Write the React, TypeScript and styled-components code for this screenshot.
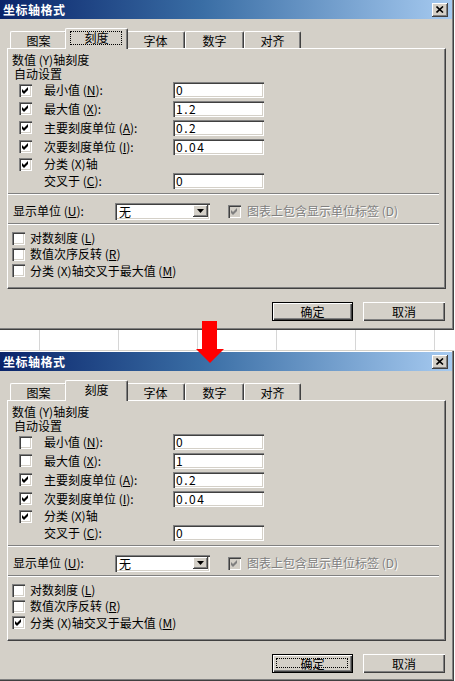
import React from "react";
import styled, { createGlobalStyle, css } from "styled-components";

const FONT = `"Noto Sans CJK SC", "Noto Sans", sans-serif`;

const Global = createGlobalStyle`
  html, body { margin: 0; padding: 0; background: #ffffff; }
  body { font-family: ${FONT}; font-size: 12px; color: #000; }
  * { box-sizing: border-box; }
`;

const Page = styled.div`
  position: relative;
  width: 455px;
  height: 681px;
  overflow: hidden;
  background: #fff;
  display: flex;
  flex-direction: column;
`;

const Dialog = styled.div<{ $h: number; $edge?: boolean }>`
  width: 454px;
  height: ${(p) => p.$h}px;
  flex-shrink: 0;
  background: #d4d0c8;
  display: flex;
  flex-direction: column;
  box-shadow: inset -1px -1px #404040, inset -2px -2px #808080;
  ${(p) =>
    p.$edge &&
    css`
      border-top: 1px solid #d4d0c8;
      padding-top: 1px;
      background-image: linear-gradient(#ffffff, #ffffff);
      background-size: 100% 1px;
      background-repeat: no-repeat;
      background-position: 0 0;
    `}
`;

const TitleBar = styled.div`
  height: 19px;
  flex-shrink: 0;
  margin-right: 2px;
  background: linear-gradient(to right, #0a246a, #3a6ea5 45%, #a6caf0);
  display: flex;
  align-items: center;
  justify-content: space-between;
  padding-left: 3px;
  padding-right: 4px;
`;

const TitleText = styled.span`
  color: #fff;
  font-weight: bold;
  font-size: 12px;
  line-height: 19px;
  letter-spacing: 0.5px;
`;

const CloseButton = styled.div`
  width: 16px;
  height: 14px;
  background: #d4d0c8;
  box-shadow: inset -1px -1px #404040, inset 1px 1px #ffffff, inset -2px -2px #808080;
  display: flex;
  align-items: center;
  justify-content: center;
`;

const TabStrip = styled.div`
  display: flex;
  align-items: flex-end;
  height: 20px;
  margin-top: 9px;
  padding-left: 10px;
  position: relative;
  z-index: 2;
`;

const Tab = styled.div<{ $w: number; $active?: boolean }>`
  position: relative;
  width: ${(p) => p.$w}px;
  height: 17px;
  background: #d4d0c8;
  border-top: 1px solid #fff;
  border-left: 1px solid #fff;
  border-right: 1px solid #404040;
  border-top-left-radius: 2px;
  border-top-right-radius: 2px;
  box-shadow: inset -1px 0 #808080;
  display: flex;
  align-items: center;
  justify-content: center;
  line-height: 15px;
  ${(p) =>
    p.$active &&
    css`
      width: ${p.$w + 4}px;
      margin: 0 -2px -1px;
      height: 21px;
      padding-bottom: 3px;
      z-index: 3;
    `}
`;

const FocusRect = styled.span`
  position: absolute;
  left: 4px;
  right: 5px;
  top: 2px;
  bottom: 4px;
  border: 1px dotted #000;
`;

const Panel = styled.div`
  margin-left: 7px;
  width: 439px;
  height: 241px;
  flex-shrink: 0;
  background: #d4d0c8;
  border-top: 1px solid #fff;
  border-left: 1px solid #fff;
  border-right: 1px solid #404040;
  border-bottom: 1px solid #404040;
  box-shadow: inset -1px -1px #808080;
  padding-top: 4px;
  display: flex;
  flex-direction: column;
`;

const Heading = styled.div<{ $indent: number }>`
  height: 14px;
  line-height: 14px;
  padding-left: ${(p) => p.$indent}px;
  white-space: nowrap;
`;

const OptionRow = styled.div<{ $h: number; $indent: number; $gap: number }>`
  height: ${(p) => p.$h}px;
  display: flex;
  align-items: center;
  gap: ${(p) => p.$gap}px;
  padding-left: ${(p) => p.$indent}px;
  white-space: nowrap;
`;

const Box = styled.span<{ $disabled?: boolean; $empty?: boolean }>`
  width: 13px;
  height: 13px;
  flex-shrink: 0;
  display: inline-flex;
  align-items: center;
  justify-content: center;
  background: ${(p) => (p.$disabled ? "#d4d0c8" : "#fff")};
  box-shadow: inset 1px 1px #808080, inset 2px 2px #404040, inset -1px -1px #ffffff,
    inset -2px -2px #d4d0c8;
  ${(p) =>
    p.$empty &&
    css`
      background: transparent;
      box-shadow: none;
    `}
`;

const OptionLabel = styled.span<{ $w?: number }>`
  ${(p) => (p.$w ? `width: ${p.$w}px;` : "")}
  line-height: 14px;
  flex-shrink: 0;
`;

const TextField = styled.div`
  width: 91px;
  height: 16px;
  background: #fff;
  box-shadow: inset 1px 1px #808080, inset 2px 2px #404040, inset -1px -1px #ffffff,
    inset -2px -2px #d4d0c8;
  padding: 0 0 0 3px;
  line-height: 16px;
  letter-spacing: 1.5px;
  font-size: 12px;
`;

const Separator = styled.div<{ $top: number }>`
  height: 2px;
  margin: ${(p) => p.$top}px 6px 0 0;
  border-top: 1px solid #808080;
  border-bottom: 1px solid #ffffff;
  flex-shrink: 0;
`;

const DisplayRow = styled.div`
  height: 28px;
  padding: 4px 0 0 5px;
  display: flex;
  align-items: center;
  white-space: nowrap;
`;

const Select = styled.div`
  width: 95px;
  height: 17px;
  background: #fff;
  box-shadow: inset 1px 1px #808080, inset 2px 2px #404040, inset -1px -1px #ffffff,
    inset -2px -2px #d4d0c8;
  display: flex;
  align-items: center;
  justify-content: space-between;
  padding: 0 2px 0 4px;
  margin-right: 18px;
`;

const DropButton = styled.span`
  width: 15px;
  height: 12px;
  background: #d4d0c8;
  box-shadow: inset -1px -1px #404040, inset 1px 1px #ffffff, inset -2px -2px #808080;
  display: flex;
  align-items: center;
  justify-content: center;
`;

const GrayLabel = styled.span`
  color: #808080;
  text-shadow: 1px 1px 0 #ffffff;
  margin-left: 6px;
  line-height: 14px;
`;

const Footer = styled.div`
  display: flex;
  justify-content: flex-end;
  gap: 10px;
  padding: 13px 9px 0 0;
`;

const Button = styled.div<{ $w: number; $default?: boolean }>`
  position: relative;
  width: ${(p) => p.$w}px;
  height: 19px;
  background: #d4d0c8;
  display: flex;
  align-items: center;
  justify-content: center;
  line-height: 14px;
  box-shadow: inset 1px 1px #ffffff, inset -1px -1px #404040, inset -2px -2px #808080;
  ${(p) =>
    p.$default &&
    css`
      border: 1px solid #000;
    `}
`;

const ButtonFocus = styled.span`
  position: absolute;
  left: 3px;
  right: 4px;
  top: 3px;
  bottom: 4px;
  border: 1px dotted #000;
`;

const Gap = styled.div`
  height: 20px;
  flex-shrink: 0;
  background-color: #fff;
  background-image: linear-gradient(to right, #d6d6d6 1px, transparent 1px);
  background-size: 79px 100%;
  background-position: 39px 0;
`;

const ArrowWrap = styled.div`
  position: absolute;
  left: 196px;
  top: 321px;
  width: 28px;
  height: 42px;
  z-index: 10;
`;

const Check = ({ gray }: { gray?: boolean }) => (
  <svg width="9" height="9" viewBox="0 0 9 9">
    <polygon points="1,3 3,5 7,1 7,4 3,8 1,6" fill={gray ? "#808080" : "#000"} />
  </svg>
);

const CheckBox = ({ checked, disabled }: { checked: boolean; disabled?: boolean }) => (
  <Box $disabled={disabled}>{checked && <Check gray={disabled} />}</Box>
);

type Opt = { label: React.ReactNode; checked: boolean | null; value?: string; h: number };

type DialogProps = {
  h: number;
  edge?: boolean;
  tabFocus?: boolean;
  okFocus?: boolean;
  opts: Opt[];
  bottom: boolean[];
};

const tabs = [
  { t: "图案", w: 57 },
  { t: "刻度", w: 59 },
  { t: "字体", w: 59 },
  { t: "数字", w: 59 },
  { t: "对齐", w: 57 },
];

const bottomLabels: React.ReactNode[] = [
  <>对数刻度 (<u>L</u>)</>,
  <>数值次序反转 (<u>R</u>)</>,
  <>分类 (X)轴交叉于最大值 (<u>M</u>)</>,
];

const AxisDialog = ({ h, edge, tabFocus, okFocus, opts, bottom }: DialogProps) => (
  <Dialog $h={h} $edge={edge}>
    <TitleBar>
      <TitleText>坐标轴格式</TitleText>
      <CloseButton>
        <svg width="8" height="7" viewBox="0 0 8 7">
          <path d="M0.5 0.5 L7 6.5 M7 0.5 L0.5 6.5" stroke="#000" strokeWidth="1.6" />
        </svg>
      </CloseButton>
    </TitleBar>
    <TabStrip>
      {tabs.map((tb, i) => (
        <Tab key={tb.t} $w={tb.w} $active={i === 1}>
          {tb.t}
          {i === 1 && tabFocus && <FocusRect />}
        </Tab>
      ))}
    </TabStrip>
    <Panel>
      <Heading $indent={4}>数值 (Y)轴刻度</Heading>
      <Heading $indent={6}>自动设置</Heading>
      {opts.map((o, i) => (
        <OptionRow key={i} $h={o.h} $indent={11} $gap={12}>
          {o.checked === null ? <Box $empty /> : <CheckBox checked={o.checked} />}
          <OptionLabel $w={117}>{o.label}</OptionLabel>
          {o.value !== undefined && <TextField>{o.value}</TextField>}
        </OptionRow>
      ))}
      <Separator $top={3} />
      <DisplayRow>
        <OptionLabel $w={102}>
          显示单位 (<u>U</u>):
        </OptionLabel>
        <Select>
          <span>无</span>
          <DropButton>
            <svg width="7" height="4" viewBox="0 0 7 4">
              <polygon points="0,0 7,0 3.5,4" fill="#000" />
            </svg>
          </DropButton>
        </Select>
        <CheckBox checked disabled />
        <GrayLabel>图表上包含显示单位标签 (D)</GrayLabel>
      </DisplayRow>
      <Separator $top={0} />
      <div style={{ height: 5 }} />
      {bottomLabels.map((l, i) => (
        <OptionRow key={i} $h={i === 2 ? 17 : 16} $indent={4} $gap={5}>
          <CheckBox checked={bottom[i]} />
          <OptionLabel>{l}</OptionLabel>
        </OptionRow>
      ))}
    </Panel>
    <Footer>
      <Button $w={81} $default>
        确定
        {okFocus && <ButtonFocus />}
      </Button>
      <Button $w={82}>取消</Button>
    </Footer>
  </Dialog>
);

const makeOpts = (c: boolean[], max: string): Opt[] => [
  { label: <>最小值 (<u>N</u>):</>, checked: c[0], value: "0", h: 18 },
  { label: <>最大值 (<u>X</u>):</>, checked: c[1], value: max, h: 19 },
  { label: <>主要刻度单位 (<u>A</u>):</>, checked: c[2], value: "0.2", h: 19 },
  { label: <>次要刻度单位 (<u>I</u>):</>, checked: c[3], value: "0.04", h: 19 },
  { label: <>分类 (X)轴</>, checked: c[4], h: 16 },
  { label: <>交叉于 (<u>C</u>):</>, checked: null, value: "0", h: 18 },
];

export default function App() {
  return (
    <>
      <Global />
      <Page>
        <AxisDialog
          h={330}
          tabFocus
          opts={makeOpts([true, true, true, true, true], "1.2")}
          bottom={[false, false, false]}
        />
        <Gap />
        <AxisDialog
          h={331}
          edge
          okFocus
          opts={makeOpts([false, false, true, true, true], "1")}
          bottom={[false, false, true]}
        />
        <ArrowWrap>
          <svg width="28" height="42" viewBox="0 0 28 42">
            <rect x="6" y="0" width="15" height="28" fill="#ff0000" />
            <polygon points="0,28 28,28 14,42" fill="#ff0000" />
          </svg>
        </ArrowWrap>
      </Page>
    </>
  );
}
